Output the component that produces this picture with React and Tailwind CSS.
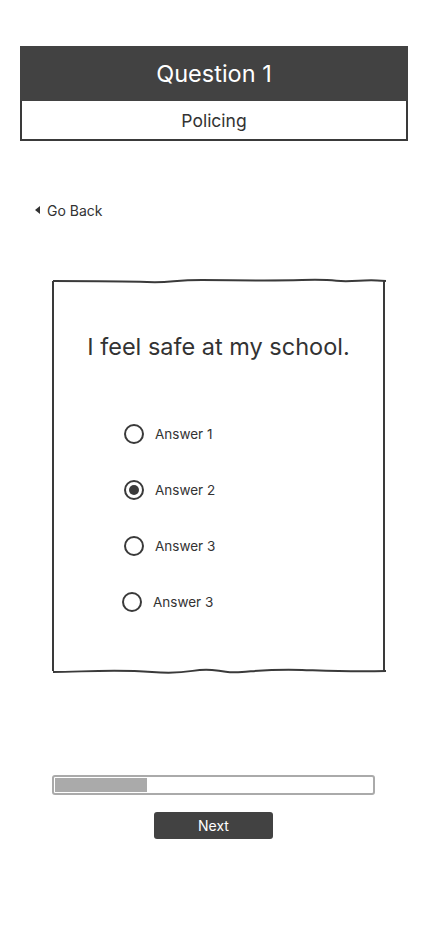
const answers = [
  { label: "Answer 1", checked: false, shift: "" },
  { label: "Answer 2", checked: true, shift: "" },
  { label: "Answer 3", checked: false, shift: "" },
  { label: "Answer 3", checked: false, shift: "-ml-[2px]" },
];

const Radio = ({ checked }) => (
  <span className="flex h-[20px] w-[20px] items-center justify-center rounded-full border-2 border-[#3a3a3a] bg-white">
    {checked && <span className="h-[10px] w-[10px] rounded-full bg-[#3a3a3a]" />}
  </span>
);

const Wave = ({ bottom }) => (
  <svg
    className={`absolute left-[-2px] ${bottom ? "bottom-[-4px]" : "top-[-4px]"}`}
    width="335"
    height="8"
    viewBox="0 0 335 8"
  >
    {bottom ? (
      <path
        d="M1 5 C 30 5, 60 2, 100 5 S 140 1, 160 3 S 175 6, 190 5 S 220 2, 250 3 S 300 5, 334 4"
        fill="none"
        stroke="#3a3a3a"
        strokeWidth="2"
      />
    ) : (
      <path
        d="M1 4 C 30 4, 70 4, 95 5 S 120 3, 150 3 S 210 4, 250 3 S 280 5, 300 4 S 320 3, 334 4"
        fill="none"
        stroke="#3a3a3a"
        strokeWidth="2"
      />
    )}
  </svg>
);

export default function App() {
  return (
    <div
      className="min-h-[926px] w-[428px] bg-white text-[#333]"
      style={{ fontFamily: "Inter, 'Noto Sans', sans-serif" }}
    >
      <div className="px-[20px] pt-[46px]">
        <div className="flex h-[55px] items-center justify-center bg-[#424242] text-[23.5px] text-white">
          Question 1
        </div>
        <div className="flex h-[40px] items-center justify-center border-2 border-t-0 border-[#3a3a3a] pt-[3px] text-[17.5px]">
          Policing
        </div>
      </div>

      <div className="ml-[35px] mt-[59px] flex h-[20px] items-center gap-[7px] text-[14px]">
        <span className="h-0 w-0 border-y-[4px] border-r-[5px] border-y-transparent border-r-[#333]" />
        <span>Go Back</span>
      </div>

      <div className="relative ml-[52px] mt-[61px] h-[390px] w-[333px] border-x-2 border-[#3a3a3a]">
        <Wave />
        <Wave bottom />
        <p className="pt-[52px] text-center text-[23.5px] leading-[28px]">
          I feel safe at my school.
        </p>
        <div className="mt-[63px] flex flex-col gap-[36px] pl-[70px]">
          {answers.map((a, i) => (
            <div key={i} className={`flex h-[20px] items-center gap-[11px] text-[13.5px] ${a.shift}`}>
              <Radio checked={a.checked} />
              <span>{a.label}</span>
            </div>
          ))}
        </div>
      </div>

      <div className="ml-[52px] mt-[104px] h-[20px] w-[323px] rounded-[3px] border-2 border-[#aaa] p-[1px]">
        <div className="h-full w-[92px] bg-[#aaa]" />
      </div>

      <div className="mt-[17px] flex justify-center pr-[1px]">
        <button className="h-[27px] w-[119px] rounded-[3px] bg-[#424242] text-[14px] text-white">
          Next
        </button>
      </div>
    </div>
  );
}
